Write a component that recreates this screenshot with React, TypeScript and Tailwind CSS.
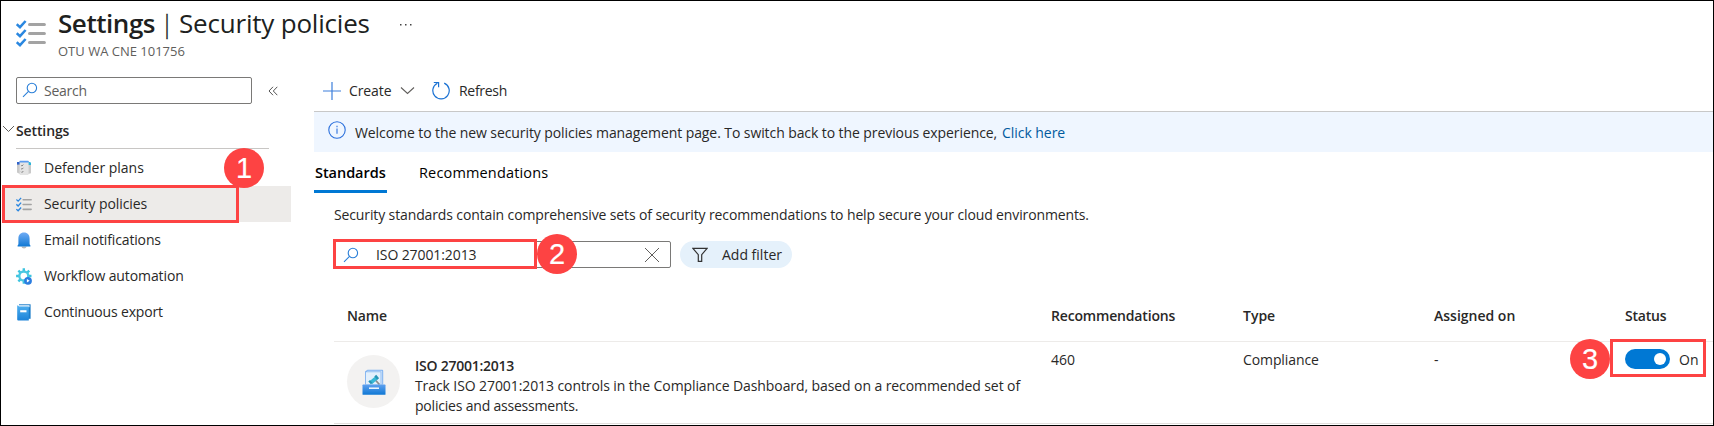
import React from "react";

const FONT = "font-['Open_Sans','Noto_Sans',sans-serif]";

function Checklist({ className }: { className?: string }) {
  return (
    <svg viewBox="0 0 30 27" className={className} fill="none">
      {[0, 9, 18].map((y) => (
        <g key={y}>
          <path d={`M0.7 ${y + 4.2} L4 ${y + 7.2} L9.6 ${y + 1}`} stroke="#2a87e0" strokeWidth="2.5" />
          <path d={`M13.5 ${y + 4.6} H28.4`} stroke="#a3a3a3" strokeWidth="3" strokeLinecap="round" />
        </g>
      ))}
    </svg>
  );
}

function SearchIcon({ className }: { className?: string }) {
  return (
    <svg viewBox="0 0 16 16" className={className} fill="none" stroke="#2a7fd8" strokeWidth="1.1">
      <circle cx="9.9" cy="6" r="4.7" />
      <path d="M6.5 9.4 L1 14.9" />
    </svg>
  );
}

function PlansIcon() {
  return (
    <svg viewBox="0 0 16 16" className="size-4" fill="none">
      <path d="M1 3h4v11.2a8 8 0 0 1-4-1.6z" fill="#c9c9c9" />
      <path d="M11 3h4v10.2l-4 1z" fill="#c9c9c9" />
      <path d="M1 2h3v2.600H1z" fill="#2f62c9" />
      <path d="M12 2h2.200l.8 1v2h-3z" fill="#2db5d8" />
      <path d="M3.600 2h9v12.200q0 .8-.8.8H4.400q-.8 0-.8-.8z" fill="#e4e4e4" />
      <path d="M4 .8h8q.8 0 .8.8V2.600H3.400V1.600Q3.400.8 4 .8z" fill="#5b9bf0" />
      <path d="M5.200 5.300l.8.8 1.300-1.500M5.200 8.500l.8.8 1.300-1.500M5.200 11.700l.8.8 1.300-1.500" stroke="#777" strokeWidth=".9" />
    </svg>
  );
}

function BellIcon() {
  return (
    <svg viewBox="0 0 16 17" className="h-[17px] w-4">
      <defs>
        <linearGradient id="bell" x1="0" y1="0" x2="0" y2="1">
          <stop offset="0" stopColor="#6fabf4" />
          <stop offset="1" stopColor="#0f78d4" />
        </linearGradient>
      </defs>
      <path d="M5.300 14.500h5.400Q10.200 16.600 8 16.600T5.300 14.500z" fill="#b9b9b9" />
      <path d="M8 .6c3.600 0 5.600 2.600 5.600 5.900v5.700l.8 1.300v1H1.600v-1l.8-1.300V6.500C2.400 3.200 4.400.6 8 .6z" fill="url(#bell)" />
    </svg>
  );
}

function GearIcon() {
  return (
    <svg viewBox="0 0 16 17" className="h-[17px] w-4" fill="none">
      <g stroke="#3cc3df" strokeWidth="2.400">
        {[0, 45, 90, 135].map((a) => (
          <path key={a} d="M7.800.3v3M7.800 12.700v3" transform={`rotate(${a} 7.800 8)`} />
        ))}
      </g>
      <circle cx="7.800" cy="8" r="4.500" stroke="#4bc8e2" strokeWidth="2.300" />
      <circle cx="12" cy="12.800" r="3.900" fill="#2b7de0" />
      <path d="M10.900 11v3.600l2.800-1.800z" fill="#fff" />
    </svg>
  );
}

function BookIcon() {
  return (
    <svg viewBox="0 0 16 17" className="h-[17px] w-4">
      <defs>
        <linearGradient id="book" x1="0" y1="0" x2="0" y2="1">
          <stop offset="0" stopColor="#4fb0f0" />
          <stop offset="1" stopColor="#1b82d8" />
        </linearGradient>
      </defs>
      <path d="M3 .3h11.600v14.500H3z" fill="#1a7cc9" />
      <path d="M2.600 1.200h10.900v2H2.600z" fill="#e9f4fd" />
      <path d="M1.200 2q0-.8.8-.6l1 1h9.800v14.200H2.200q-1 0-1-1z" fill="url(#book)" />
      <path d="M4.200 6.200h6.300v2.100H4.200z" fill="#fff" />
    </svg>
  );
}

function StandardIcon() {
  return (
    <svg viewBox="0 0 24 26" className="h-[26px] w-6" fill="none">
      <defs>
        <linearGradient id="tray" x1="0" y1="0" x2="0" y2="1">
          <stop offset="0" stopColor="#5ea0ef" />
          <stop offset="1" stopColor="#0f78d4" />
        </linearGradient>
      </defs>
      <path d="M3 15.500V2.500L5.500.8h14.700q1 0 1 1v13.700z" fill="#7fb2f0" />
      <path d="M3.900 15.500V3.200h14.700v12.300z" fill="#e3f0fc" />
      <path d="M5.500 1.700h14.700v13.500h-.9V2.500H4.800z" fill="#cfe3fa" />
      <path d="M12 9.500l5.400 6" stroke="#8d8d8d" strokeWidth="1.800" />
      <path d="M7.800 12l5.400-4.600 2.500 2.900-5.400 4.600z" fill="#37b9d6" />
      <path d="M12.300 7.400l1.900-1.600 2.900 3.400-1.900 1.600zM6.300 12.400l1.700-1.400 2.500 3-1.600 1.300z" fill="#2795b5" />
      <path d="M.5 16.200q0-.6.600-.6h21.800q.6 0 .6.600v9q0 .6-.6.600H1.100q-.6 0-.6-.6z" fill="url(#tray)" />
      <path d="M7 18.500h10v1.400H7z" fill="#fff" />
    </svg>
  );
}

function Badge({ n, className }: { n: number; className: string }) {
  return (
    <div
      className={`absolute flex size-10 items-center justify-center rounded-full bg-[#fd4343] font-['Liberation_Sans',sans-serif] text-[29px] leading-none text-white [-webkit-text-stroke:0.2px_white] ${className}`}
    >
      {n}
    </div>
  );
}

const navItems = [
  { label: "Defender plans", icon: <PlansIcon />, track: "tracking-[-0.02px]" },
  { label: "Security policies", icon: <Checklist className="h-[15px] w-4" />, active: true, track: "tracking-[-0.08px]" },
  { label: "Email notifications", icon: <BellIcon />, track: "tracking-[-0.15px]" },
  { label: "Workflow automation", icon: <GearIcon />, track: "tracking-[-0.1px]" },
  { label: "Continuous export", icon: <BookIcon />, track: "tracking-[-0.17px]" },
];

export default function App() {
  return (
    <div className={`relative flex h-[426px] w-[1714px] flex-col overflow-hidden border border-black bg-white text-[14px] leading-5 whitespace-nowrap text-[#292827] ${FONT}`}>
      <header className="flex h-[69px] shrink-0 pl-[15px]">
        <Checklist className="mt-[19px] h-[27px] w-[30px]" />
        <div className="ml-3 w-[312px] pt-[6px]">
          <h1 className="flex h-8 items-center text-[26px] leading-8 text-[#201f1e]">
            <span className="w-[102px] font-semibold tracking-[-0.45px]">Settings</span>
            <span className="w-[19px] font-light [-webkit-text-stroke:0.3px_#201f1e]">|</span>
            <span className="tracking-[-0.2px]">Security policies</span>
          </h1>
          <div className="mt-[2px] text-[13px] leading-5 text-[#605e5c]">OTU WA CNE 101756</div>
        </div>
        <svg viewBox="0 0 14 4" className="mt-[22px] ml-[29px] h-1 w-[14px]" fill="#444">
          <path d="M1 1h1.500v1.500H1zM6 1h1.500v1.500H6zM11 1h1.500v1.500H11z" />
        </svg>
      </header>

      <div className="flex flex-1">
        <aside className="w-[313px] shrink-0">
          <div className="flex h-9 items-center pl-[15px]">
            <div className="mt-[4px] flex h-[27px] w-[236px] items-center rounded-[2px] border border-[#7a7977] pl-[5px] text-[#605e5c]">
              <SearchIcon className="size-4" />
              <span className="mt-px ml-[6px] tracking-[-0.25px]">Search</span>
            </div>
            <svg viewBox="0 0 10 10" className="mt-[5px] ml-[16px] size-[10px]" fill="none" stroke="#555" strokeWidth="1">
              <path d="M5 .8L1 5l4 4.200M9.300.8L5.300 5l4 4.200" />
            </svg>
          </div>
          <div className="flex h-[43px] items-end pl-[1px]">
            <div className="flex h-[28px] items-start">
              <svg viewBox="0 0 13 8" className="mt-[4px] h-2 w-[13px]" fill="none" stroke="#605e5c" strokeWidth="1">
                <path d="M1 1l5.500 5.500L12 1" />
              </svg>
              <div className="ml-px h-[28px] w-[253px] border-b border-[#c8c6c4] font-semibold tracking-[-0.12px]">Settings</div>
            </div>
          </div>
          <nav className="mt-[1px]">
            {navItems.map((item) => (
              <div
                key={item.label}
                className={`ml-[1px] flex h-9 w-[289px] items-center pl-[14px] ${item.active ? "bg-[#edebe9]" : ""}`}
              >
                {item.icon}
                <span className={`ml-3 ${item.track}`}>{item.label}</span>
              </div>
            ))}
          </nav>
        </aside>

        <main className="min-w-0 flex-1">
          <div className="flex h-[42px] items-center border-b border-[#c8c8c8] pl-[9px]">
            <svg viewBox="0 0 18 18" className="size-[18px]" fill="none" stroke="#3d7fdb" strokeWidth="1.200">
              <path d="M9 0v18M0 9h18" />
            </svg>
            <span className="ml-[8px] w-[43px] tracking-[-0.1px]">Create</span>
            <svg viewBox="0 0 15 9" className="ml-[8px] h-[9px] w-[15px]" fill="none" stroke="#605e5c" strokeWidth="1.100">
              <path d="M1 1.500l6.500 6L14 1.500" />
            </svg>
            <svg viewBox="0 0 18 19" className="ml-[17px] h-[19px] w-[18px]" fill="none" stroke="#1b72d3" strokeWidth="1.200">
              <path d="M12.200 2.100A8.200 8.200 0 1 1 5.400 2.300M1.800 1.500h4.800v4.700" />
            </svg>
            <span className="ml-[9px] tracking-[-0.3px]">Refresh</span>
          </div>
          <div className="flex h-10 items-start bg-[#eff6ff] pl-[14px]">
            <svg viewBox="0 0 18 18" className="mt-[9px] size-[18px]" fill="none" stroke="#2a6fdc" strokeWidth="1.100">
              <circle cx="9" cy="9" r="8.200" />
              <path d="M9 7.500v5.300M9 4.800v1.400" />
            </svg>
            <span className="mt-[11px] ml-[9px] w-[647px] tracking-[-0.085px]">
              Welcome to the new security policies management page. To switch back to the previous experience,
            </span>
            <a className="mt-[11px] tracking-[-0.05px] text-[#005a9e]">Click here</a>
          </div>
          <div className="flex h-[41px] text-[14.5px]">
            <div className="h-[41px] w-[73px] border-b-3 border-[#0078d4] pt-[11px] pl-px font-semibold tracking-[-0.05px] text-black">Standards</div>
            <div className="ml-8 pt-[11px] tracking-[0.16px] text-black">Recommendations</div>
          </div>
          <div className="pl-5">
            <p className="pt-[12px] tracking-[-0.125px]">
              Security standards contain comprehensive sets of security recommendations to help secure your cloud environments.
            </p>
            <div className="mt-[16px] flex items-center">
              <div className="flex h-[27px] w-[337px] items-center rounded-[2px] border border-[#7a7977] pr-2.5 pl-[8px]">
                <SearchIcon className="size-4" />
                <span className="ml-[17px] flex-1 tracking-[-0.1px]">ISO 27001:2013</span>
                <svg viewBox="0 0 16 16" className="size-4" fill="none" stroke="#605e5c" strokeWidth="1">
                  <path d="M1 1l14 14M15 1L1 15" />
                </svg>
              </div>
              <div className="ml-[9px] flex h-[27px] w-[112px] items-center rounded-full bg-[#e5f1fb] pl-3">
                <svg viewBox="0 0 16 16" className="size-4" fill="none" stroke="#333" strokeWidth="1.200">
                  <path d="M.9 1.300h14.200L9.700 7.700v6.700H6.300V7.700z" />
                </svg>
                <span className="ml-[14px]">Add filter</span>
              </div>
            </div>
            <div className="flex h-[74px] border-b border-[#edebe9] pt-[38px] pl-[13px] font-semibold text-[#292827]">
              <div className="w-[704px] tracking-[-0.15px]">Name</div>
              <div className="w-[192px] tracking-[-0.17px]">Recommendations</div>
              <div className="w-[191px]">Type</div>
              <div className="w-[191px]">Assigned on</div>
              <div className="tracking-[-0.2px]">Status</div>
            </div>
            <div className="flex h-[82px] border-b border-[#e1dfdd] pl-[13px]">
              <div className="mt-[13px] flex size-[53px] items-center justify-center rounded-full bg-[#f3f2f1]">
                <StandardIcon />
              </div>
              <div className="ml-[15px] w-[636px] pt-[14px]">
                <div className="font-semibold tracking-[-0.25px]">ISO 27001:2013</div>
                <div className="tracking-[-0.09px]">Track ISO 27001:2013 controls in the Compliance Dashboard, based on a recommended set of</div>
                <div className="tracking-[-0.2px]">policies and assessments.</div>
              </div>
              <div className="w-[192px] pt-2">460</div>
              <div className="w-[191px] pt-2 tracking-[-0.1px]">Compliance</div>
              <div className="w-[191px] pt-2">-</div>
              <div className="flex h-8 items-center pt-[1px]">
                <div className="flex h-5 w-[45px] shrink-0 items-center justify-end rounded-full bg-[#0078d4] pr-1">
                  <div className="size-3 rounded-full bg-white" />
                </div>
                <span className="mt-[2px] ml-[9px]">On</span>
              </div>
            </div>
          </div>
        </main>
      </div>

      <div className="absolute top-[184px] left-[1px] h-[38px] w-[237px] border-3 border-[#fd4343]" />
      <div className="absolute top-[238px] left-[332px] h-[30px] w-[204px] border-3 border-[#fd4343]" />
      <div className="absolute top-[338px] left-[1609px] h-[38px] w-[96px] border-3 border-[#fd4343]" />
      <Badge n={1} className="top-[147px] left-[223px]" />
      <Badge n={2} className="top-[233px] left-[536px]" />
      <Badge n={3} className="top-[338px] left-[1569px]" />
    </div>
  );
}
